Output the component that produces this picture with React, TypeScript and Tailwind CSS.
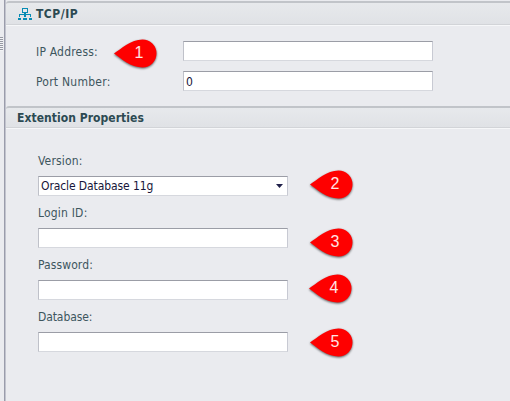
import type { ReactNode } from "react";

function Marker({ n, place }: { n: number; place: string }) {
  return (
    <div className={`absolute h-8 w-12 ${place}`}>
      <svg
        className="absolute inset-0 drop-shadow-[0.5px_1px_1px_rgba(0,0,0,0.6)]"
        width="48"
        height="32"
        viewBox="0 0 48 32"
      >
        <path
          d="M2 15.5C9 11 19 1.5 30.5 1.5A14 14 0 0 1 30.5 29.5C19 29.5 9 20.5 2 15.5Z"
          fill="#fe0000"
        />
      </svg>
      <span className="absolute top-[5px] left-[19px] w-4 text-center font-['Liberation_Sans',sans-serif] text-[16px] leading-5 text-white/90">
        {n}
      </span>
    </div>
  );
}

function Header({ size, children }: { size: string; children: ReactNode }) {
  return (
    <h2
      className={`flex items-center rounded-tl-[3px] border-t-2 border-b border-t-[#c1c4c9] border-b-[#d2d4d8] bg-linear-to-b from-[#e7e9ec] to-[#e0e2e6] text-[12px] font-bold text-[#2c4a52] shadow-[0_1px_0_#f6f7f9] ${size}`}
    >
      {children}
    </h2>
  );
}

const field =
  "flex h-5 w-[250px] items-center border border-t-[#9b9da6] border-r-[#c8cad3] border-b-[#d6d8de] border-l-[#bfc1c9] bg-white text-[#16163a]";

function StackedField({
  label,
  spacing,
  children,
}: {
  label: string;
  spacing: string;
  children?: ReactNode;
}) {
  return (
    <div className="h-[52px]">
      <div className={`h-[23px] leading-4 ${spacing}`}>{label}</div>
      <div className={field}>{children}</div>
    </div>
  );
}

export default function App() {
  return (
    <div className="relative flex h-[401px] w-[510px] overflow-hidden bg-[#eaebef] font-['DejaVu_Sans_Condensed','DejaVu_Sans',sans-serif] text-[12px] text-[#3d565e]">
      <div className="w-1 shrink-0 bg-[#eaebef] pt-[37px]">
        <div className="h-[14px] w-[3px] bg-[repeating-linear-gradient(to_bottom,#9698a2_0_1px,#f3f4f6_1px_2px)]" />
      </div>
      <div className="w-[2px] shrink-0 border-r border-r-[#c2c4ce] bg-[#9a9cab]" />
      <main className="flex-1">
        <div className="h-px bg-[#eaebef]" />
        <section className="h-[105px]">
          <Header size="h-6">
            <svg
              className="mr-1 ml-3"
              width="14"
              height="12"
              viewBox="0 0 14 12"
              shapeRendering="crispEdges"
            >
              <path
                fill="#078cb4"
                d="M4 0h6v5H4zM6 5h2v1H6zM1 6h12v1H1zM1 6h1v3H1zM6 6h2v3H6zM12 6h1v3h-1zM0 10h3v2H0zM5 10h4v2H5zM11 10h3v2h-3z"
              />
              <path fill="#e7e9ec" d="M5 1h4v3H5z" />
            </svg>
            <span className="pt-px tracking-[0.5px]">TCP/IP</span>
          </Header>
          <div className="flex flex-col gap-[10px] pt-4 pl-[30px]">
            <div className="flex items-center">
              <span className="w-[147px] pt-px tracking-[0.2px]">IP Address:</span>
              <div className={field} />
            </div>
            <div className="flex items-center">
              <span className="w-[147px] pt-px tracking-[0.25px]">Port Number:</span>
              <div className={field}>
                <span className="pt-px pl-[2px]">0</span>
              </div>
            </div>
          </div>
        </section>
        <section>
          <Header size="h-[22px]">
            <span className="pt-px pl-[11px] tracking-[0.05px]">Extention Properties</span>
          </Header>
          <div className="pt-[25px] pl-8">
            <StackedField label="Version:" spacing="tracking-[0.15px]">
              <span className="flex-1 pl-[2px] tracking-[-0.1px]">Oracle Database 11g</span>
              <svg className="mr-1" width="7" height="4" viewBox="0 0 7 4">
                <path d="M0 0h7L3.5 4z" fill="#20204a" />
              </svg>
            </StackedField>
            <StackedField label="Login ID:" spacing="tracking-[0.2px]" />
            <StackedField label="Password:" spacing="tracking-[0.1px]" />
            <StackedField label="Database:" spacing="tracking-[-0.1px]" />
          </div>
        </section>
      </main>
      <Marker n={1} place="left-[112px] top-[38px]" />
      <Marker n={2} place="left-[308px] top-[169px]" />
      <Marker n={3} place="left-[308px] top-[227px]" />
      <Marker n={4} place="left-[307px] top-[273px]" />
      <Marker n={5} place="left-[308px] top-[327px]" />
    </div>
  );
}
